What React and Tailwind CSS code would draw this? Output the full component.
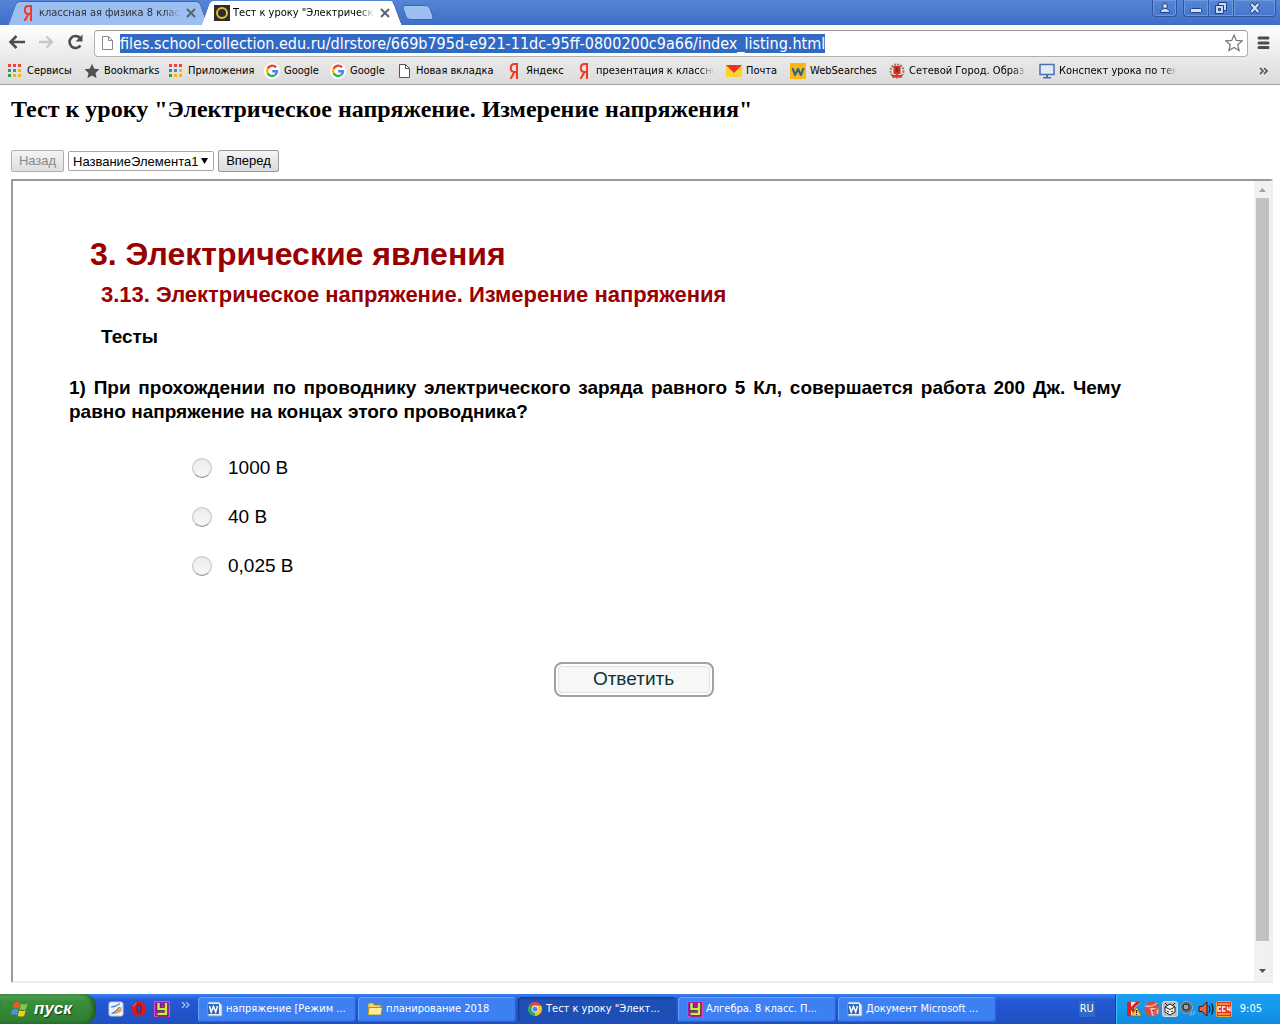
import React from "react";

// bookmark bar icons

function AppsIcon() {
  const colors = ["#e8453c", "#e8453c", "#e8453c", "#2aa24e", "#3f83f0", "#f6b60b", "#2aa24e", "#f6b60b", "#f6b60b"];
  return (
    <svg width="16" height="16" viewBox="0 0 16 16" shapeRendering="crispEdges">
      {colors.map((c, i) => (
        <rect key={i} x={1 + (i % 3) * 5} y={1 + Math.floor(i / 3) * 5} width="3" height="3" fill={c} />
      ))}
    </svg>
  );
}

function StarIcon() {
  return (
    <svg width="16" height="16" viewBox="0 0 16 16">
      <path d="M8 .8l2.2 4.9 5.3.6-4 3.6 1.1 5.3L8 12.5l-4.6 2.7 1.1-5.3-4-3.6 5.3-.6z" fill="#505050" />
    </svg>
  );
}

function GoogleIcon() {
  return (
    <svg width="16" height="16" viewBox="0 0 16 16">
      <circle cx="8" cy="8" r="8" fill="#fff" />
      <g fill="none" strokeWidth="2.4">
        <path d="M12 4.4A5 5 0 0 0 3.6 5.8" stroke="#ea4335" />
        <path d="M3.6 5.8a5 5 0 0 0 0 4.5" stroke="#fbbc05" />
        <path d="M3.6 10.3a5 5 0 0 0 7.6 1.5" stroke="#34a853" />
        <path d="M11.2 11.8A5 5 0 0 0 13 8.2H8.2" stroke="#4285f4" />
      </g>
    </svg>
  );
}

function PageIcon({ color = "#555" }) {
  return (
    <svg width="16" height="16" viewBox="0 0 16 16" fill="#fff" stroke={color}>
      <path d="M3.5 1.5h6l4 4v9h-10z" />
      <path d="M9.5 1.5v4h4" fill="none" />
    </svg>
  );
}

function YandexIcon() {
  return (
    <svg width="16" height="16" viewBox="0 0 16 16" fill="none" stroke="#f03b22" strokeWidth="2">
      <path d="M11 16V1H8.6C6 1 4.8 2.8 4.8 5s1.2 4 3.8 4H11M8.4 9L4.6 16" />
    </svg>
  );
}

function MailIcon() {
  return (
    <svg width="16" height="16" viewBox="0 0 16 16">
      <path d="M0 2h16v12H0z" fill="#fcd333" />
      <path d="M0 2h16L8 10z" fill="#f03226" />
    </svg>
  );
}

function WebSearchIcon() {
  return (
    <svg width="16" height="16" viewBox="0 0 16 16">
      <path d="M0 0h16v16H0z" fill="#fdb714" />
      <path
        d="M2.500 5l2.500 7L8 6l3 6 2.500-7"
        fill="none"
        stroke="#2d6491"
        strokeWidth="2.200"
        strokeLinejoin="round"
      />
    </svg>
  );
}

function CrestIcon() {
  return (
    <svg width="16" height="16" viewBox="0 0 16 16">
      <circle cx="8" cy="8" r="6.5" fill="#e9e0d8" stroke="#8c8478" strokeWidth="2" strokeDasharray="2 1" />
      <path d="M4.500 3h7v7.500L8 12l-3.500-1.500z" fill="#e02a20" />
      <path d="M3 12h10v2.500H3z" fill="#d93a28" />
      <path d="M8 4v5" stroke="#77324a" strokeWidth="2" />
    </svg>
  );
}

function MonitorIcon() {
  return (
    <svg width="16" height="16" viewBox="0 0 16 16">
      <path d="M1 1.500h14v10H1z" fill="#e4eaf4" stroke="#4c6fae" strokeWidth="1.500" />
      <path d="M7 12h2v2h3v1.500H4V14h3z" fill="#4c6fae" />
    </svg>
  );
}

// taskbar icons

function WordIcon() {
  return (
    <svg width="16" height="16" viewBox="0 0 16 16">
      <path d="M1 1h11l3 3v11H1z" fill="#e8f0fb" stroke="#7f9fd0" />
      <path d="M1 3h11v10H1z" fill="#2f68b8" />
      <path d="M2.500 5l1.700 6L6.500 5.500 8.700 11l1.800-6" fill="none" stroke="#fff" strokeWidth="1.500" />
    </svg>
  );
}

function FolderIcon() {
  return (
    <svg width="16" height="16" viewBox="0 0 16 16" stroke="#a97c14" strokeWidth=".8">
      <path d="M1 3.500L2 2h4l1.500 2H14v10H1z" fill="#f6d567" />
      <path d="M1 14l1-7.500h13.200L14 14z" fill="#ffeb9c" />
    </svg>
  );
}

function ChromeIcon() {
  return (
    <svg width="16" height="16" viewBox="0 0 16 16">
      <path d="M8 8L1.900 4.500A7 7 0 0 1 14.100 4.500H8z" fill="#e8453c" />
      <path d="M8 8L8 15A7 7 0 0 1 1.900 4.500z" fill="#34a853" />
      <path d="M8 8V4.500h6.100A7 7 0 0 1 8 15z" fill="#fbc116" />
      <circle cx="8" cy="8" r="3.400" fill="#fff" />
      <circle cx="8" cy="8" r="2.600" fill="#4285f4" />
    </svg>
  );
}

function AlgebraIcon() {
  return (
    <svg width="16" height="16" viewBox="0 0 16 16">
      <path d="M.5.5h15v15H.5z" fill="#a020a8" stroke="#e048c8" />
      <path d="M4.500 2v6H12M12 2v11.500H3.500" fill="none" stroke="#4d0a52" strokeWidth="4" />
      <path d="M4.500 2v6H12M12 2v11H3.500" fill="none" stroke="#c0f040" strokeWidth="2.600" />
    </svg>
  );
}

function NoteIcon() {
  return (
    <svg width="16" height="16" viewBox="0 0 16 16">
      <rect x="1" y="1" width="14" height="14" rx="2" fill="#f3f6fb" stroke="#b9cbe8" />
      <path d="M3 6c3 0 6-1 9-3.500" fill="none" stroke="#5b94e0" strokeWidth="1.600" />
      <path d="M3 12.500c4 0 8-3 10.500-7.500v5c-2 2-5 3-8 3z" fill="#f0a030" />
      <path d="M3.500 12.500c3-1 6-3.500 8-6.500" fill="none" stroke="#3568b8" strokeWidth="1.200" />
    </svg>
  );
}

function OperaIcon() {
  return (
    <svg width="16" height="16" viewBox="0 0 16 16">
      <circle cx="8" cy="8" r="7.500" fill="#cf1f22" />
      <ellipse cx="8" cy="8" rx="2" ry="5" fill="#2a4fb8" stroke="#96090d" />
      <path d="M2.500 5.500A6 6 0 0 1 5.500 2" fill="none" stroke="#f08080" />
    </svg>
  );
}

function WindowsIcon() {
  return (
    <svg width="20" height="20" viewBox="0 0 20 20">
      <path d="M4 4c2-1.500 4-1.500 6 0L8.500 9.500c-2-1.300-4-1.300-6 0z" fill="#f05a28" />
      <path d="M11 4.500c2 1.200 4 1.200 6.500 0L16 10c-2 1.200-4 1.200-6.500 0z" fill="#8cc63f" />
      <path d="M2.200 10.800c2-1.300 4-1.300 6 0L6.700 16.300c-2-1.300-4-1.300-6 0z" fill="#4a90f0" />
      <path d="M9.200 11.200c2 1.200 4 1.200 6.500 0L14.200 16.700c-2 1.200-4 1.200-6.500 0z" fill="#fcc81e" />
    </svg>
  );
}

// tray icons

function TrayIcons() {
  return (
    <>
      <svg width="16" height="16" viewBox="0 0 16 16">
        <path d="M1 1h14L9 7l6 8H1z" fill="#e8eef4" />
        <path d="M1 1h4v5l5-5h5L8 7l5 8H9L5 9v6H1z" fill="#d9261c" />
        <path d="M10.500 6l5 9h-10z" fill="#f6d43a" stroke="#7c6410" strokeWidth=".7" />
        <path d="M10.500 9v3M10.500 13v1" stroke="#222" strokeWidth="1.200" />
      </svg>
      <svg width="16" height="16" viewBox="0 0 16 16">
        <circle cx="8" cy="8" r="7.500" fill="#dc4c3c" />
        <path d="M1 5c5 1 9 0 12-3" fill="none" stroke="#f4b0a0" strokeWidth="1.500" />
        <path d="M6 7h9l-1 6-6 2z" fill="#f0c4b8" />
        <path d="M8 10l2-1v5M12 14V8h3" fill="none" stroke="#c03020" strokeWidth="1.200" />
      </svg>
      <svg width="16" height="16" viewBox="0 0 16 16">
        <rect x=".5" y=".5" width="15" height="15" rx="2" fill="#b9bdc4" stroke="#d8dade" />
        <path d="M3 6l5-3 5 3v5l-5 3-5-3z" fill="#f6f6f6" stroke="#222" />
        <path d="M3 6l5 2.500L13 6M3 2l2 2M13 2l-2 2M5 10l2 1M9 11l2-1" fill="none" stroke="#222" />
      </svg>
      <svg width="16" height="16" viewBox="0 0 16 16">
        <circle cx="6.500" cy="6.500" r="6" fill="#5c6670" stroke="#a0a8b0" />
        <circle cx="6" cy="6" r="3" fill="#98a4b0" stroke="#20282e" />
        <path d="M10 15l2-4M13 14l2-4" stroke="#7aa8f8" strokeWidth="1.500" />
      </svg>
      <svg width="16" height="16" viewBox="0 0 16 16">
        <path d="M1 5.500h3L9 1v14l-5-4.500H1z" fill="#e06840" stroke="#3a1008" />
        <path d="M11 4.500q2 3.500 0 7M13.500 2.500q3 5.500 0 11" fill="none" stroke="#123" strokeWidth="1.400" />
      </svg>
      <svg width="16" height="16" viewBox="0 0 16 16">
        <rect x=".5" y=".5" width="15" height="15" rx="1" fill="#e8301c" stroke="#f8a838" />
        <path d="M2 3h12M2 13h12" stroke="#f8b040" strokeWidth="1.500" />
        <path d="M5 6H2v4h3M9.500 6h-3v4h3M11.500 5.500v3H14M14 5.500v5" fill="none" stroke="#fff" strokeWidth="1.300" />
      </svg>
    </>
  );
}

const bookmarks = [
  { label: "Сервисы", icon: <AppsIcon />, width: "w-[45px]" },
  { label: "Bookmarks", icon: <StarIcon />, width: "w-[52px]" },
  { label: "Приложения", icon: <AppsIcon />, width: "w-16" },
  { label: "Google", icon: <GoogleIcon />, width: "w-[34px]" },
  { label: "Google", icon: <GoogleIcon />, width: "w-[34px]" },
  { label: "Новая вкладка", icon: <PageIcon />, width: "w-[78px]" },
  { label: "Яндекс", icon: <YandexIcon />, width: "w-[38px]" },
  { label: "презентация к классно", icon: <YandexIcon />, width: "w-[118px]", fade: true },
  { label: "Почта", icon: <MailIcon />, width: "w-8" },
  { label: "WebSearches", icon: <WebSearchIcon />, width: "w-[67px]" },
  { label: "Сетевой Город. Образ", icon: <CrestIcon />, width: "w-[118px]", fade: true },
  { label: "Конспект урока по тем", icon: <MonitorIcon />, width: "w-[118px]", fade: true },
];

const tasks = [
  { label: "напряжение [Режим ...", icon: <WordIcon /> },
  { label: "планирование 2018", icon: <FolderIcon /> },
  { label: 'Тест к уроку "Элект...', icon: <ChromeIcon />, active: true },
  { label: "Алгебра. 8 класс. П...", icon: <AlgebraIcon /> },
  { label: "Документ Microsoft ...", icon: <WordIcon /> },
];

const answers = ["1000 В", "40 В", "0,025 В"];

function Tab({ label, icon, active }) {
  return (
    <div
      className={
        "relative isolate flex h-6 w-48 items-center gap-[3px] pl-2 pr-1.5 before:absolute before:inset-y-0 before:left-0 before:w-2/3 before:-skew-x-[20deg] before:rounded-tl before:border-l before:border-t before:content-[''] after:absolute after:inset-y-0 after:right-0 after:w-2/3 after:skew-x-[20deg] after:rounded-tr after:border-r after:border-t after:content-[''] " +
        (active
          ? "z-10 before:border-white before:bg-white after:border-t-white after:border-r-[#2b55a0] after:bg-white"
          : "before:border-[#3a66b4] before:bg-[#9bbff0] after:border-[#3a66b4] after:bg-[#9bbff0]")
      }
    >
      <span className="z-10 shrink-0">{icon}</span>
      <span
        className={
          "z-10 min-w-0 flex-1 overflow-hidden whitespace-nowrap [mask-image:linear-gradient(to_right,black_88%,transparent)] " +
          (active ? "text-black" : "text-[#333]")
        }
      >
        {label}
      </span>
      <button type="button" aria-label="Закрыть вкладку" className="z-10 shrink-0">
        <svg width="14" height="14" viewBox="0 0 14 14" stroke="#5a6470" strokeWidth="2">
          <path d="M3 3l8 8M11 3l-8 8" />
        </svg>
      </button>
    </div>
  );
}

function WindowButtons() {
  const frame = "flex h-[17px] items-center justify-center border border-t-0 border-[#2f559f] shadow-[inset_0_0_0_1px_#6d97dc] ";
  return (
    <div className="flex">
      <button type="button" aria-label="Профиль" className={frame + "mr-1.5 w-[25px] rounded-b"}>
        <svg width="12" height="12" viewBox="0 0 12 12" fill="#c5d9f7" stroke="#234080">
          <path d="M1.500 10.500v-2l3-2h3l3 2v2z" />
          <circle cx="6" cy="4" r="2.500" />
        </svg>
      </button>
      <button type="button" aria-label="Свернуть" className={frame + "w-[26px] rounded-bl"}>
        <svg width="14" height="12" viewBox="0 0 14 12">
          <rect x="1.500" y="6.500" width="11" height="4" rx="1" fill="#d5e4fb" stroke="#234080" />
        </svg>
      </button>
      <button type="button" aria-label="Восстановить" className={frame + "-ml-px w-[26px]"}>
        <svg width="14" height="14" viewBox="0 0 14 14" stroke="#234080" fill="#c5d9f7">
          <path d="M4.500 1.500h8v8h-8z" />
          <path d="M1.500 4.500h8v8h-8z" />
          <path d="M4.500 7.500h2v2h-2z" fill="#4677cc" />
        </svg>
      </button>
      <button type="button" aria-label="Закрыть" className={frame + "-ml-px w-[43px] rounded-br"}>
        <svg width="14" height="12" viewBox="0 0 14 12" fill="none">
          <path d="M3 1.500l7.500 9M10.500 1.500L3 10.500" stroke="#234080" strokeWidth="4" />
          <path d="M3.300 2l7 8M10.300 2l-7 8" stroke="#d5e4fb" strokeWidth="2.200" />
        </svg>
      </button>
    </div>
  );
}

function Browser() {
  return (
    <header className="shrink-0 font-['DejaVu_Sans_Condensed','Noto_Sans',sans-serif] text-[11px]">
      <div className="flex h-[25px] items-start justify-between overflow-hidden bg-linear-to-b from-[#5585d6] to-[#3f6ec7] pl-3 pr-1">
        <div className="flex items-start gap-0.5 pt-px">
          <Tab label="классная ая физика 8 клас" icon={<YandexIcon />} />
          <Tab
            active
            label={'Тест к уроку "Электрическ'}
            icon={
              <svg width="16" height="16" viewBox="0 0 16 16">
                <path d="M0 0h16v16H0z" fill="#2d2d30" />
                <circle cx="8" cy="8" r="5" fill="none" stroke="#e3c22b" strokeWidth="2" />
              </svg>
            }
          />
          <button
            type="button"
            aria-label="Новая вкладка"
            className="ml-1 mt-1 h-[15px] w-7 skew-x-[20deg] rounded-sm border border-[#3a66b4] bg-[#9bbff0]"
          />
        </div>
        <WindowButtons />
      </div>

      <div className="flex h-8 items-center bg-linear-to-b from-white to-[#eaeaea] pl-2">
        <button type="button" aria-label="Назад" className="mr-3">
          <svg width="18" height="16" viewBox="0 0 18 16" fill="none" stroke="#4d4d4d" strokeWidth="2.500">
            <path d="M17 9H3M8.500 3L2.500 9l6 6" />
          </svg>
        </button>
        <button type="button" aria-label="Вперед" className="mr-3">
          <svg width="16" height="16" viewBox="0 0 16 16" fill="none" stroke="#c8c8c8" strokeWidth="2.300">
            <path d="M1 9h13M8.500 3.500L14 9l-5.500 5.500" />
          </svg>
        </button>
        <button type="button" aria-label="Обновить" className="mr-2.5">
          <svg width="18" height="18" viewBox="0 0 18 18">
            <path d="M14.500 13.500A6 6 0 1 1 14 6" fill="none" stroke="#4d4d4d" strokeWidth="2.600" />
            <path d="M16.500 2.500v7h-7z" fill="#4d4d4d" />
          </svg>
        </button>
        <div className="mt-1 flex h-[27px] min-w-0 flex-1 items-center rounded-sm border border-[#b0b0b0] border-t-[#999] bg-white px-1">
          <PageIcon color="#888" />
          <a
            href="#listing"
            className="ml-[5px] h-[19px] whitespace-nowrap bg-[#316ac5] text-[16px] leading-[19px] text-white"
          >
            files.school-collection.edu.ru/dlrstore/669b795d-e921-11dc-95ff-0800200c9a66/index_listing.html
          </a>
          <button type="button" aria-label="Добавить в закладки" className="ml-auto">
            <svg width="18" height="18" viewBox="0 0 18 18" fill="#fff" stroke="#777" strokeWidth="1.200">
              <path d="M9 1l2.300 5.400 5.900.5-4.500 3.800 1.400 5.800L9 13.400l-5.100 3.100 1.400-5.800L.8 6.900l5.900-.5z" />
            </svg>
          </button>
        </div>
        <button type="button" aria-label="Меню" className="mx-2">
          <svg width="16" height="16" viewBox="0 0 16 16" stroke="#4d4d4d" strokeWidth="3" strokeLinecap="round">
            <path d="M3 5h9M3 10h9M3 14.500h9" />
          </svg>
        </button>
      </div>

      <nav className="flex h-7 items-center border-b border-[#a3a3a3] bg-linear-to-b from-[#eaeaea] to-[#dcdcdc] pl-[7px] pr-3">
        <ul className="flex min-w-0 flex-1 gap-3 overflow-hidden">
          {bookmarks.map((b, i) => (
            <li key={i}>
              <a href="#bookmark" className="flex items-center gap-1 whitespace-nowrap leading-[18px] text-black">
                <span className="shrink-0">{b.icon}</span>
                <span
                  className={
                    b.width +
                    (b.fade ? " overflow-hidden [mask-image:linear-gradient(to_right,black_88%,transparent)]" : "")
                  }
                >
                  {b.label}
                </span>
              </a>
            </li>
          ))}
        </ul>
        <button type="button" aria-label="Другие закладки">
          <svg width="9" height="8" viewBox="0 0 9 8" fill="none" stroke="#505050" strokeWidth="1.600">
            <path d="M1 1l3 3-3 3M5 1l3 3-3 3" />
          </svg>
        </button>
      </nav>
    </header>
  );
}

function Question() {
  return (
    <form className="min-w-0 flex-1 pl-14 pr-[133px] pt-[54px] text-[19px]" onSubmit={(e) => e.preventDefault()}>
      <h2 className="pl-[21px] text-[32px] font-bold leading-[38px] text-[#990000]">3. Электрические явления</h2>
      <h3 className="pl-8 pt-2 text-[22px] font-bold leading-7 text-[#990000]">
        3.13. Электрическое напряжение. Измерение напряжения
      </h3>
      <h4 className="pl-8 pt-4 font-bold leading-6">Тесты</h4>
      <fieldset>
        <legend className="w-full pt-[27px] text-justify font-bold leading-6">
          1) При прохождении по проводнику электрического заряда равного 5 Кл, совершается работа 200 Дж. Чему равно
          напряжение на концах этого проводника?
        </legend>
        <div className="flex flex-col gap-[25px] pl-[123px] pt-8">
          {answers.map((answer) => (
            <label key={answer} className="flex h-6 items-center gap-4">
              <input
                type="radio"
                name="answer"
                value={answer}
                className="size-5 appearance-none rounded-full border border-[#c8c8c8] border-b-[#8f8f8f] bg-linear-to-b from-[#ececec] to-[#f8f8f8] shadow-[inset_0_0_0_1px_#e6e6e6]"
              />
              {answer}
            </label>
          ))}
        </div>
      </fieldset>
      <div className="flex justify-center pl-[77px] pt-[84px]">
        <button
          type="submit"
          className="h-[35px] w-40 rounded-lg border-2 border-[#9aa5a3] bg-[#f7f7f7] text-[#0d3338] shadow-[inset_0_0_0_2px_#fff,inset_0_0_0_3px_#dce3e1]"
        >
          Ответить
        </button>
      </div>
    </form>
  );
}

function ScrollBar() {
  return (
    <div className="flex w-[17px] shrink-0 flex-col items-center bg-[#f1f1f1]">
      <div className="flex h-[17px] items-center">
        <svg width="7" height="4" viewBox="0 0 7 4" fill="#a3a3a3">
          <path d="M3.500 0L7 4H0z" />
        </svg>
      </div>
      <div className="w-[13px] flex-1 bg-[#c1c1c1]" />
      <div className="flex h-10 items-end pb-2">
        <svg width="7" height="4" viewBox="0 0 7 4" fill="#505050">
          <path d="M0 0h7L3.500 4z" />
        </svg>
      </div>
    </div>
  );
}

function Taskbar() {
  return (
    <footer className="flex h-[30px] shrink-0 items-stretch bg-linear-to-b from-[#3a80ee] via-[#2459d6] via-20% to-[#1f50c0] font-['DejaVu_Sans_Condensed','Noto_Sans',sans-serif] text-[11px] text-white">
      <button
        type="button"
        className="flex w-24 items-center gap-1 rounded-r-xl bg-linear-to-b from-[#5eac5c] via-[#388e3a] via-25% to-[#2f7d32] pl-2.5 font-['Liberation_Sans',sans-serif] text-[17px] font-bold italic shadow-[inset_-3px_0_4px_#1d5a20] [text-shadow:1px_1px_1px_#1a3d1a]"
      >
        <WindowsIcon />
        пуск
      </button>
      <div className="flex w-[102px] items-center gap-[7px] pl-3">
        <NoteIcon />
        <OperaIcon />
        <AlgebraIcon />
        <svg className="mb-2 ml-1" width="9" height="6" viewBox="0 0 9 6" fill="none" stroke="#a9c8fa" strokeWidth="1.200">
          <path d="M1 0l3 3-3 3M5 0l3 3-3 3" />
        </svg>
      </div>
      <div className="flex min-w-0 flex-1 items-center gap-0.5">
        {tasks.map((task) => (
          <button
            key={task.label}
            type="button"
            className={
              "flex h-[25px] w-[158px] items-center gap-[3px] whitespace-nowrap rounded-sm pl-[9px] " +
              (task.active
                ? "bg-[#1d4fb5] shadow-[inset_1px_1px_2px_#123a8c]"
                : "bg-[#3c80f3] shadow-[inset_1px_1px_1px_#6ba2fa,inset_-1px_-1px_1px_#2a62cf]")
            }
          >
            {task.icon}
            {task.label}
          </button>
        ))}
      </div>
      <div className="flex items-center pr-5">
        <span className="w-4 bg-[#316ac5] text-center leading-4">RU</span>
      </div>
      <div className="flex items-center gap-0.5 border-l border-[#0f3f90] bg-linear-to-b from-[#1c9cf0] via-[#149aee] to-[#1088dc] pl-[10px] pr-[18px] shadow-[inset_1px_0_1px_#38c8fa]">
        <TrayIcons />
        <time className="ml-1.5">9:05</time>
      </div>
    </footer>
  );
}

export default function App() {
  return (
    <div className="flex min-h-screen flex-col bg-white text-black">
      <Browser />
      <main className="flex flex-1 flex-col pb-[11px] pl-[11px] pr-[7px] pt-[10px] font-['Liberation_Sans',sans-serif]">
        <h1 className="font-['Liberation_Serif',serif] text-[24px] font-bold leading-7">
          Тест к уроку "Электрическое напряжение. Измерение напряжения"
        </h1>
        <div className="flex items-center gap-1 pb-[7px] pt-[27px] text-[13px]">
          <button
            type="button"
            disabled
            className="h-[22px] w-[53px] rounded-xs border border-[#b0b0b0] bg-linear-to-b from-[#f4f4f4] to-[#dedede] text-[#8a8a8a]"
          >
            Назад
          </button>
          <div className="relative flex items-center">
            <select
              aria-label="Элемент"
              className="h-5 w-[146px] appearance-none rounded-xs border border-[#a6a6a6] bg-white pl-1 leading-none"
            >
              <option>НазваниеЭлемента1</option>
            </select>
            <svg className="pointer-events-none absolute right-1.5" width="7" height="6" viewBox="0 0 7 6">
              <path d="M0 0h7L3.500 6z" />
            </svg>
          </div>
          <button
            type="button"
            className="h-[22px] w-[61px] rounded-xs border border-[#999] bg-linear-to-b from-[#f4f4f4] to-[#dadada]"
          >
            Вперед
          </button>
        </div>
        <section className="flex flex-1 border-2 border-b-[#eee] border-l-[#9a9a9a] border-r-[#eee] border-t-[#9a9a9a]">
          <Question />
          <ScrollBar />
        </section>
      </main>
      <Taskbar />
    </div>
  );
}
